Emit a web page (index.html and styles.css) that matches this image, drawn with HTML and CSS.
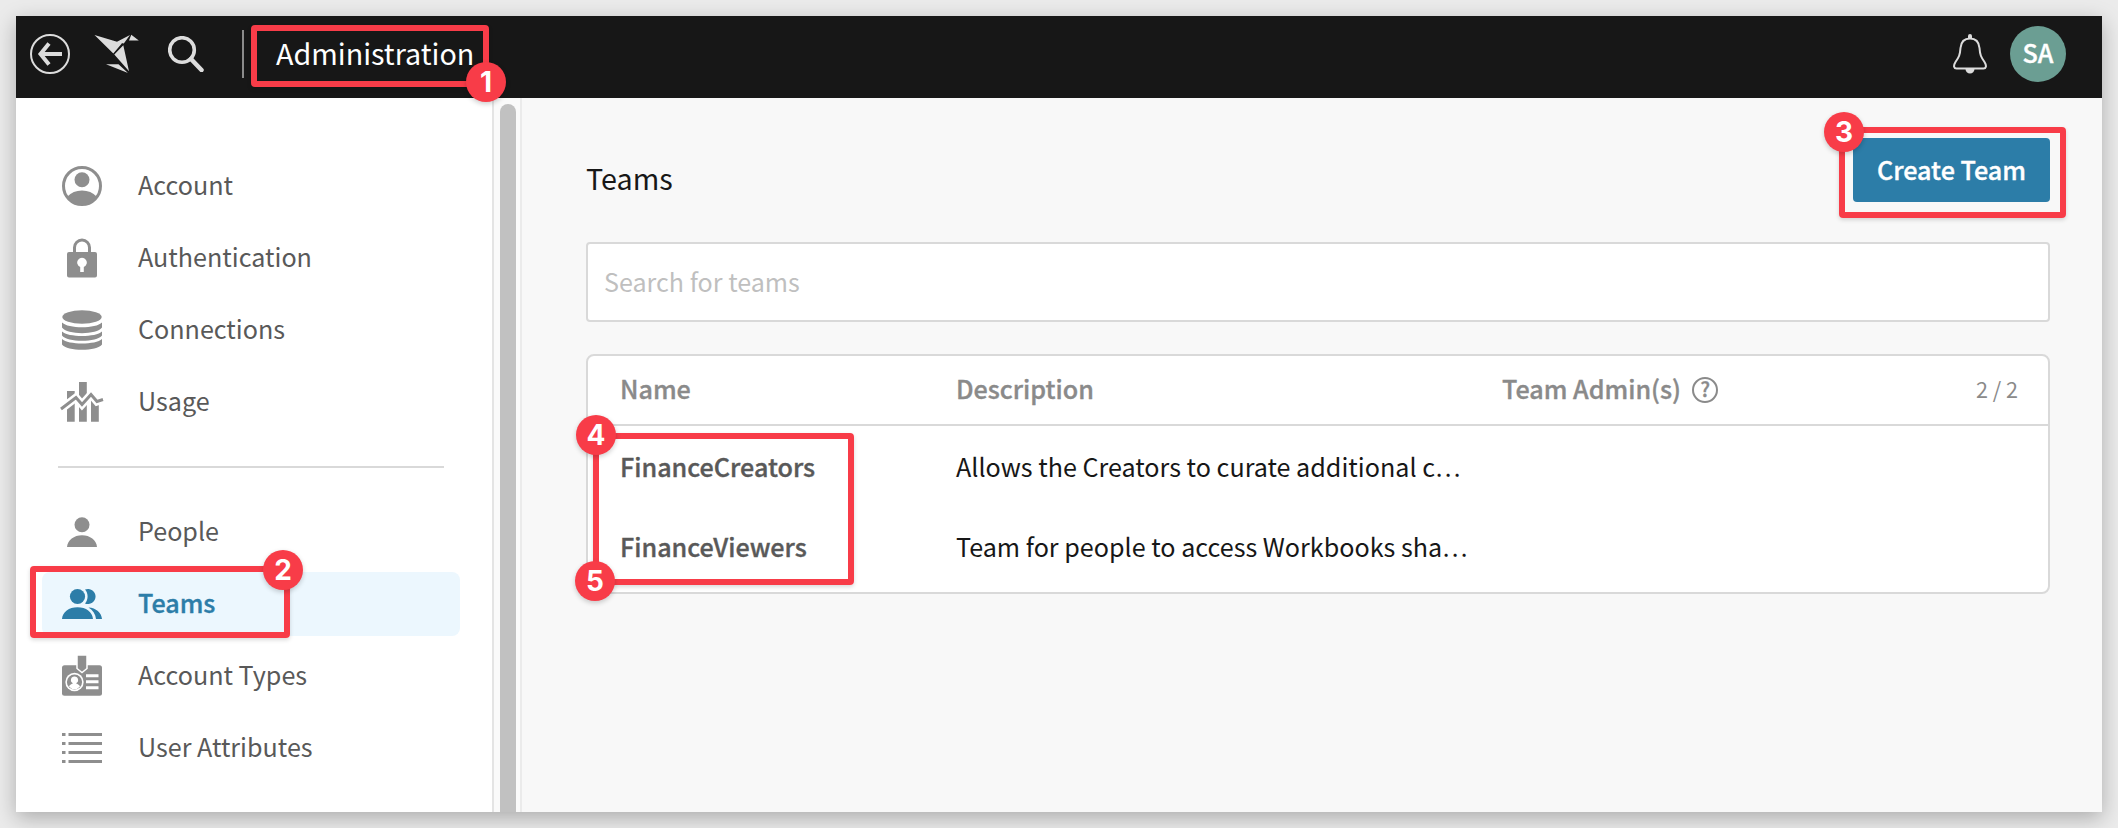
FILE: index.html
```html
<!DOCTYPE html>
<html lang="en">
<head>
<meta charset="utf-8">
<title>Administration - Teams</title>
<link rel="stylesheet" href="styles.css">
</head>
<body>
<div class="window">
  <header class="topbar">
    <svg class="icon-back" viewBox="0 0 40 40"><circle cx="20" cy="20" r="19"/><path d="M32 20H10.500M19 9.500L10.500 20l8.500 10.500"/></svg>
    <svg class="icon-bird" viewBox="0 0 46 40"><path d="M0.500 1L28 9.300 19.300 19.500zM22.500 8L36 1 29.800 9.600zM37.300 0.800L44.800 6.500H35zM29.300 11.300L35 37.300 20.300 20.500zM12 30.300H24.500L34 39z"/></svg>
    <svg class="icon-search" viewBox="0 0 36 36"><circle cx="14" cy="14" r="12.300"/><path class="handle" d="M23 23L33.500 34"/></svg>
    <span class="divider"></span>
    <h1 class="app-title">Administration</h1>
    <svg class="icon-bell" viewBox="0 0 34 40"><path class="bell-body" d="M17 4.500C11 4.500 8 8.500 7.500 14 7 21 6 23 2.500 28 0 32 1 34.500 3.500 34.500H30.500C33 34.500 34 32 31.500 28 28 23 27 21 26.500 14 26 8.500 23 4.500 17 4.500z"/><path class="bell-fill" d="M15 5V2a2 2 0 0 1 4 0V5zM12.500 35h9a4.500 4.500 0 0 1-9 0z"/></svg>
    <span class="avatar">SA</span>
  </header>
  <div class="body">
    <nav class="sidebar">
      <a class="item"><svg class="icon" viewBox="0 0 40 40"><circle class="ring" cx="20" cy="20" r="18.500"/><circle cx="20" cy="13.700" r="7.500"/><path d="M5.500 30.500C9 26.500 14 24.500 20 24.500s11 2 14.500 6C31 36.500 26 39 20 39S9 36.500 5.500 30.500z"/></svg><span>Account</span></a>
      <a class="item"><svg class="icon" viewBox="0 0 40 40"><path fill-rule="evenodd" d="M7 14h26a2 2 0 0 1 2 2v21.500a2 2 0 0 1-2 2H7a2 2 0 0 1-2-2V16a2 2 0 0 1 2-2zM18.200 29V34h3.600V29a4.800 4.800 0 1 0-3.600 0z"/><path class="shackle" d="M12.500 15V9.500a7.500 7.500 0 0 1 15 0V15"/></svg><span>Authentication</span></a>
      <a class="item"><svg class="icon" viewBox="0 0 40 40"><ellipse cx="20" cy="7" rx="19.700" ry="6.800"/><path d="M0 12.500C6 18.800 34 18.800 40 12.500V17.500C35 25 5 25 0 17.500zM0 21.500C6 27.500 34 27.500 40 21.500V25.500C35 32.500 5 32.500 0 25.500zM0 29C6 35 34 35 40 29V34.500C35 41.500 5 41.500 0 34.500z"/></svg><span>Connections</span></a>
      <a class="item"><svg class="icon" viewBox="0 0 40 40"><path d="M5 9h7.700v30.700H5zM17 0h7.800v39.700H17zM29 15h7.800v24.700H29z"/><path class="trend-halo" d="M-1 27L14 15.500 20 22.500 29 12.500 35 19.500 41 17.500"/><path class="trend" d="M-1 27L14 15.500 20 22.500 29 12.500 35 19.500 41 17.500"/></svg><span>Usage</span></a>
      <hr class="rule">
      <a class="item"><svg class="icon" viewBox="0 0 40 40"><circle cx="20" cy="12.700" r="7.500"/><path d="M5 35C5.500 28 12 23.200 20 23.200S34.500 28 35 35z"/></svg><span>People</span></a>
      <a class="item active"><svg class="icon" viewBox="0 0 40 40"><circle cx="15.500" cy="12.500" r="7.600"/><path d="M23 5.500a7.600 7.600 0 1 1 0 14c3.500-4 3.500-10 0-14zM0 35C.5 28 7 23.300 15.500 23.300S30.500 28 31 35zM26.500 23.500C34 24 39.500 28.500 40 35H34C33.500 30 31 26.500 26.500 23.500z"/></svg><span>Teams</span></a>
      <a class="item"><svg class="icon" viewBox="0 0 40 40"><rect y="9.300" width="40" height="30.400" rx="2.500"/><path class="clip" d="M15 -1H25V12.500L20 16.500 15 12.500z"/><circle class="cut" cx="12.500" cy="26" r="9.200"/><circle cx="12.500" cy="26" r="7.600"/><path class="cut" d="M12.500 20.500a3.500 3.500 0 0 1 1.500 6.700c2 .8 3.500 1.800 4 3.300a7 7 0 0 1-11 0c.5-1.500 2-2.500 4-3.300a3.500 3.500 0 0 1 1.500-6.700zM24 18.300h12.500v3H24zM24 24.300h12.500v3H24zM24 30.200h12.500v3H24z"/></svg><span>Account Types</span></a>
      <a class="item"><svg class="icon" viewBox="0 0 40 40"><path d="M0 5h3.500v3H0zM6.500 5H40v3H6.500zM0 14h3.500v3H0zM6.500 14H40v3H6.500zM0 23h3.500v3H0zM6.500 23H40v3H6.500zM0 32h3.500v3H0zM6.500 32H40v3H6.500z"/></svg><span>User Attributes</span></a>
    </nav>
    <div class="scrollbar"><div class="thumb"></div></div>
    <main class="main">
      <div class="title-row">
        <h2 class="page-title">Teams</h2>
        <button class="create">Create Team</button>
      </div>
      <input class="search" type="text" placeholder="Search for teams">
      <section class="table">
        <div class="row head">
          <span>Name</span><span>Description</span>
          <span class="admins">Team Admin(s)<span class="help">?</span></span>
          <span class="count">2 / 2</span>
        </div>
        <div class="rows">
          <div class="row"><strong class="name">FinanceCreators</strong><span class="desc">Allows the Creators to curate additional c<span class="more">…</span></span></div>
          <div class="row"><strong class="name">FinanceViewers</strong><span class="desc">Team for people to access Workbooks sha<span class="more">…</span></span></div>
        </div>
      </section>
    </main>
  </div>
</div>
<div class="mark mark-1"></div><span class="badge badge-1">1</span>
<div class="mark mark-2"></div><span class="badge badge-2">2</span>
<div class="mark mark-3"></div><span class="badge badge-3">3</span>
<div class="mark mark-4"></div><span class="badge badge-4">4</span><span class="badge badge-5">5</span>
</body>
</html>
```
FILE: styles.css
```css
* { box-sizing: border-box; }
body {
  margin: 0;
  width: 2118px;
  height: 828px;
  padding: 16px;
  overflow: hidden;
  background: #ebebeb;
  font-family: "Noto Sans CJK SC", "Noto Sans", sans-serif;
  font-size: 25.130px;
  color: #171717;
}
.window {
  height: 796px;
  display: flex;
  flex-direction: column;
  box-shadow: 0 6px 20px rgba(0, 0, 0, .27);
}
.topbar {
  flex: none;
  height: 82px;
  display: flex;
  align-items: center;
  padding: 0 36px 6px 14px;
  background: #171717;
  color: #fff;
}
.topbar svg { flex: none; fill: none; stroke: #dcdcdc; }
.icon-back { width: 40px; height: 40px; stroke-width: 2; }
.icon-back path { stroke-width: 4; }
.topbar .icon-bird { width: 46px; height: 40px; margin-left: 24px; fill: #dcdcdc; stroke: none; }
.icon-search { width: 36px; height: 36px; margin-left: 28px; stroke-width: 3.600; }
.handle { stroke-width: 4.500; stroke-linecap: round; }
.divider { width: 2px; height: 48px; margin-left: 38px; background: #8b8b8b; }
.app-title { margin: -2px auto 0 32px; font-size: 28.700px; font-weight: 400; line-height: 40px; }
.icon-bell { width: 34px; height: 40px; margin-right: 23px; stroke-width: 2; }
.topbar .bell-fill { fill: #dcdcdc; stroke: none; }
.avatar, .create, .name, .head > span:not(.count), .active span { -webkit-text-stroke: .35px currentColor; }
.avatar {
  width: 56px;
  height: 56px;
  border-radius: 50%;
  background: #6b9e93;
  font-weight: 500;
  line-height: 53px;
  text-align: center;
}
.body { flex: 1; display: flex; min-height: 0; }
.sidebar {
  width: 478px;
  padding: 56px 32px 0 26px;
  background: #fff;
  border-right: 2px solid #e4e4e4;
  display: flex;
  flex-direction: column;
  gap: 8px;
}
.item {
  height: 64px;
  display: flex;
  align-items: center;
  gap: 36px;
  padding-left: 20px;
  border-radius: 8px;
  color: #595959;
}
.item span { line-height: 40px; margin-top: -5px; }
.item.active { background: #ecf7fe; color: #2c7da8; font-weight: 500; }
.icon { width: 40px; height: 40px; fill: #8e8e8e; overflow: visible; }
.active .icon { fill: #2c7da8; }
.ring, .shackle, .trend { fill: none; stroke: #8e8e8e; stroke-width: 3; }
.trend-halo { fill: none; stroke: #fff; stroke-width: 8; }
.clip { stroke: #fff; stroke-width: 1.500; }
.cut { fill: #fff; }
.rule { width: 386px; height: 2px; margin: 24px 0 24px 16px; border: 0; background: #d9d9d9; }
.scrollbar {
  width: 28px;
  padding: 6px 4px 0 6px;
  display: flex;
  background: #fafafa;
  border-right: 2px solid #ebebeb;
}
.thumb { width: 16px; border-radius: 8px 8px 0 0; background: #c1c1c1; }
.main { flex: 1; padding: 40px 52px 0 64px; background: #f8f8f8; }
.title-row { display: flex; justify-content: space-between; height: 64px; }
.page-title { margin: 18px 0 0; font-size: 28.700px; font-weight: 400; line-height: 44px; }
.create {
  width: 197px;
  height: 64px;
  padding: 0 0 3px;
  border: 0;
  border-radius: 4px;
  background: #2c7da8;
  color: #fff;
  font: 500 25.200px "Noto Sans CJK SC", sans-serif;
}
.search {
  display: block;
  width: 100%;
  height: 80px;
  margin: 40px 0 32px;
  padding: 0 16px 3px;
  border: 2px solid #d9d9d9;
  border-radius: 4px;
  background: #fff;
  font: 25.100px "Noto Sans CJK SC", sans-serif;
}
.search::placeholder { color: #bfbfbf; opacity: 1; }
.table { height: 240px; border: 2px solid #d9d9d9; border-radius: 8px; background: #fff; }
.row {
  height: 80px;
  display: grid;
  grid-template-columns: 336px 546px 1fr auto;
  align-items: center;
  padding: 0 30px 4px 32px;
}
.head { height: 70px; border-bottom: 2px solid #d9d9d9; color: #8a8a8a; font-weight: 500; padding-bottom: 4px; }
.rows { padding-top: 2px; }
.name { font-weight: 500; color: #595959; }
.more { font-size: 24px; line-height: 1; }
.admins { display: flex; align-items: center; gap: 11px; }
.help {
  width: 26px;
  height: 26px;
  margin-top: 4px;
  border: 2px solid #8a8a8a;
  border-radius: 50%;
  font-size: 20px;
  line-height: 20px;
  text-align: center;
}
.count { font-size: 21.600px; font-weight: 400; }
.mark {
  position: absolute;
  border: 6px solid #f83c48;
  border-radius: 4px;
  box-shadow: 0 2px 4px rgba(0, 0, 0, .15);
}
.mark-1 { left: 251px; top: 25px; width: 238px; height: 62px; }
.mark-2 { left: 30px; top: 566px; width: 260px; height: 72px; }
.mark-3 { left: 1839px; top: 127px; width: 227px; height: 91px; }
.mark-4 { left: 593px; top: 433px; width: 261px; height: 152px; }
.badge {
  position: absolute;
  width: 40px;
  height: 40px;
  border-radius: 50%;
  background: #f83c48;
  box-shadow: 0 2px 5px rgba(0, 0, 0, .2);
  color: #fff;
  font: 700 28px/40px Inter, sans-serif;
  text-align: center;
}
.badge-1 { left: 466px; top: 62px; }
.badge-2 { left: 263px; top: 550px; }
.badge-3 { left: 1824px; top: 112px; }
.badge-4 { left: 576px; top: 415px; }
.badge-5 { left: 575px; top: 561px; }
```
